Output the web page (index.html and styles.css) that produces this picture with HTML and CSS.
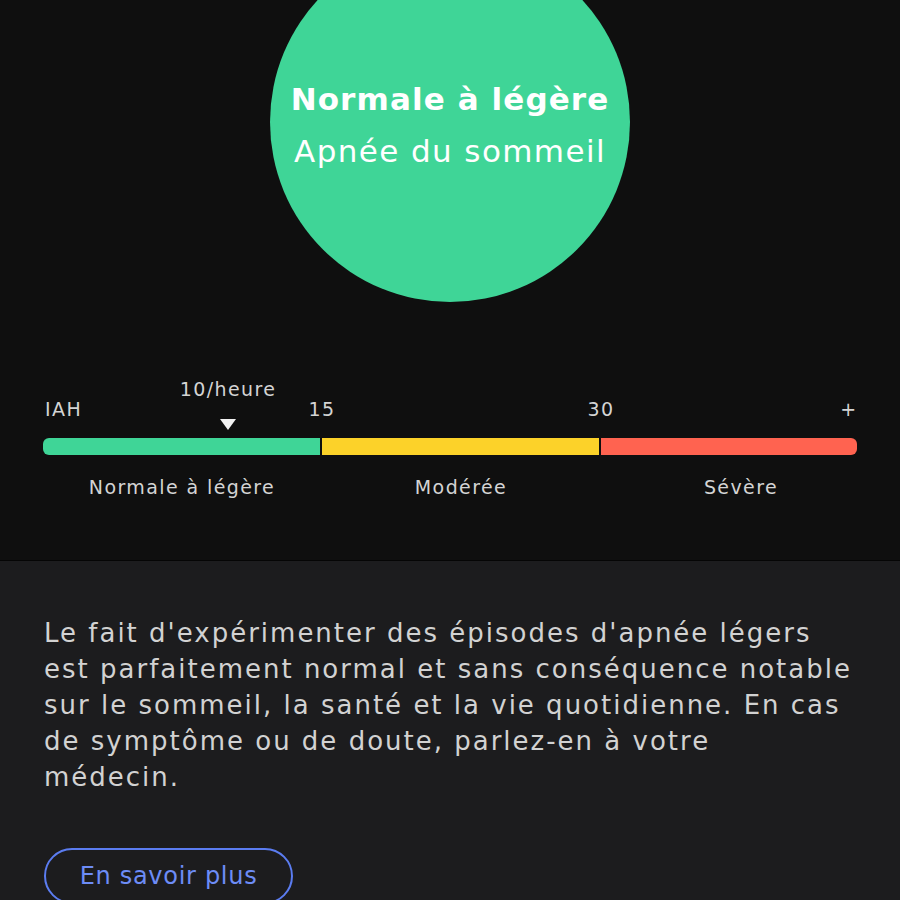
FILE: index.html
```html
<!DOCTYPE html>
<html lang="fr">
<head>
    <meta charset="UTF-8">
    <meta name="viewport" content="width=device-width, initial-scale=1.0">
    <title>Apnée du sommeil</title>
    <link rel="stylesheet" href="styles.css">
</head>
<body>
    <div class="top">
        <div class="circle">
            <div class="circle-title">Normale à légère</div>
            <div class="circle-sub">Apnée du sommeil</div>
        </div>

        <div class="scale">
            <div class="axis">
                <span class="tick tick-start">IAH</span>
                <span class="marker-label" style="left: 185px">10/heure</span>
                <span class="marker" style="left: 185px"></span>
                <span class="tick" style="left: 279px">15</span>
                <span class="tick" style="left: 558px">30</span>
                <span class="tick" style="left: 806px">+</span>
            </div>
            <div class="bar">
                <div class="seg seg-normal"></div>
                <div class="seg seg-moderate"></div>
                <div class="seg seg-severe"></div>
            </div>
            <div class="seg-labels">
                <span>Normale à légère</span>
                <span>Modérée</span>
                <span>Sévère</span>
            </div>
        </div>
    </div>

    <div class="info">
        <p class="info-text">Le fait d'expérimenter des épisodes d'apnée légers<br>
        est parfaitement normal et sans conséquence notable<br>
        sur le sommeil, la santé et la vie quotidienne. En cas<br>
        de symptôme ou de doute, parlez-en à votre<br>
        médecin.</p>
        <button class="more-btn">En savoir plus</button>
    </div>
</body>
</html>
```

FILE: styles.css
```css
body {
    margin: 0;
    background: #1c1c1e;
    font-family: "DejaVu Sans", sans-serif;
    color: #d4d4d4;
}
.top {
    height: 561px;
    box-sizing: border-box;
    background: #0f0f0f;
    border-bottom: 1px solid #050505;
    overflow: hidden;
}
.circle {
    width: 360px;
    height: 360px;
    margin: -58px auto 0;
    padding-top: 6px;
    box-sizing: border-box;
    border-radius: 50%;
    background: #3fd597;
    color: #fff;
    display: flex;
    flex-direction: column;
    align-items: center;
    justify-content: center;
    gap: 12px;
}
.circle-title {
    font-size: 31px;
    font-weight: bold;
    line-height: 40px;
    letter-spacing: 1.1px;
}
.circle-sub {
    font-size: 31px;
    line-height: 40px;
    letter-spacing: 1.4px;
}
.scale {
    margin: 68px 43px 0;
}
.axis {
    position: relative;
    height: 68px;
    font-size: 19px;
    letter-spacing: 1.4px;
}
.tick, .marker-label {
    position: absolute;
    top: 29px;
    line-height: 20px;
    transform: translateX(-50%);
    white-space: nowrap;
}
.tick-start {
    left: 2px;
    transform: none;
}
.marker-label {
    top: 9px;
}
.marker {
    position: absolute;
    top: 49px;
    width: 0;
    height: 0;
    margin-left: -8px;
    border-left: 8px solid transparent;
    border-right: 8px solid transparent;
    border-top: 11px solid #f2f2f2;
}
.bar {
    display: flex;
    gap: 2px;
    height: 17px;
    width: 814px;
}
.seg-normal {
    width: 277px;
    background: #3fd597;
    border-radius: 6px 0 0 6px;
}
.seg-moderate {
    width: 277px;
    background: #fcd229;
}
.seg-severe {
    flex: 1;
    background: #ff6350;
    border-radius: 0 6px 6px 0;
}
.seg-labels {
    display: grid;
    grid-template-columns: 278px 280px 280px;
    margin-top: 20px;
    font-size: 19px;
    line-height: 24px;
    letter-spacing: 1.4px;
    text-align: center;
}
.info {
    padding: 54px 44px 40px;
}
.info-text {
    margin: 0;
    font-size: 26px;
    line-height: 36px;
    letter-spacing: 2px;
    color: #d2d2d2;
}
.more-btn {
    margin-top: 53px;
    width: 249px;
    height: 56px;
    border: 2px solid #5b7cf0;
    border-radius: 28px;
    background: transparent;
    color: #6d8cf6;
    font-family: inherit;
    font-size: 24px;
    letter-spacing: 0.7px;
}
```
